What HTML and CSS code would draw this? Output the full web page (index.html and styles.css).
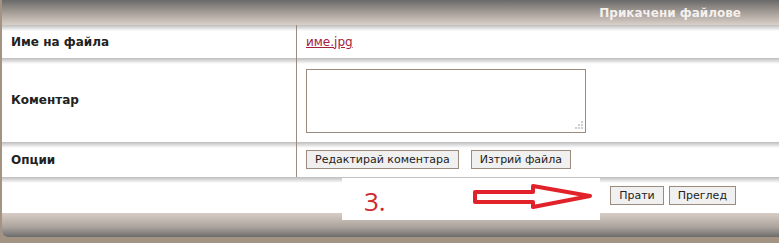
FILE: index.html
```html
<!DOCTYPE html>
<html lang="bg">
<head>
    <meta charset="UTF-8">
    <title>Прикачени файлове</title>
    <link rel="stylesheet" href="styles.css">
</head>
<body>
    <div class="panel">
        <div class="cap">Прикачени файлове</div>

        <table class="attach">
            <tr class="row-name">
                <td class="label">Име на файла</td>
                <td class="value"><a href="#">име.jpg</a></td>
            </tr>
            <tr class="row-comment">
                <td class="label">Коментар</td>
                <td class="value">
                    <span class="area-wrap">
                        <textarea class="comment"></textarea>
                        <span class="grip"></span>
                    </span>
                </td>
            </tr>
            <tr class="row-opts">
                <td class="label">Опции</td>
                <td class="value">
                    <button class="btn">Редактирай коментара</button>
                    <button class="btn btn-gap">Изтрий файла</button>
                </td>
            </tr>
        </table>

        <div class="foot">
            <div class="note">
                <span class="step">3.</span>
                <svg class="arrow" width="124" height="28" viewBox="0 0 124 28">
                    <polygon points="3,8 61,8 61,2 118,12 61,23 61,18 3,18" fill="#fff" stroke="#e2222a" stroke-width="4" stroke-linejoin="round"/>
                </svg>
            </div>
            <button class="btn">Прати</button>
            <button class="btn">Преглед</button>
        </div>

        <div class="bottom"></div>
    </div>
</body>
</html>
```

FILE: styles.css
```css
body {
    margin: 0;
    background: #a29382;
    font-family: "DejaVu Sans", Verdana, sans-serif;
    font-size: 12px;
    color: #222;
}
.panel {
    margin-left: 2px;
    background: #fff;
    height: 237px;
    border-bottom-left-radius: 5px;
    overflow: hidden;
    position: relative;
}
.cap {
    height: 25px;
    line-height: 26px;
    text-align: right;
    padding-right: 38px;
    font-weight: bold;
    color: #f4f0ee;
    background: linear-gradient(#6a6a6a, #a59d97 50%, #dad0ca);
}
.attach {
    width: 100%;
    border-collapse: collapse;
}
.attach td {
    padding: 0;
    background: linear-gradient(#bcbcbc, #fff 6px);
}
.label {
    width: 285px;
    padding-left: 9px !important;
    border-right: 1px solid #9c8b7d;
    font-weight: bold;
}
.value {
    padding-left: 9px !important;
}
.row-name td {
    height: 33px;
}
.row-comment td {
    height: 84px;
}
.row-opts td {
    height: 35px;
}
.value a {
    color: #a3203f;
}
.area-wrap {
    position: relative;
    display: inline-block;
    vertical-align: middle;
    margin-top: 2px;
}
.comment {
    display: block;
    box-sizing: border-box;
    width: 280px;
    height: 64px;
    margin: 0;
    padding: 2px;
    border: 1px solid #9c8b7d;
    resize: none;
    font-family: inherit;
}
.grip {
    position: absolute;
    right: 3px;
    bottom: 4px;
    width: 2px;
    height: 2px;
    background: #cfcfcf;
    box-shadow: -3px 0 #cfcfcf, -6px 0 #cfcfcf, 0 -3px #cfcfcf, -3px -3px #cfcfcf, 0 -6px #cfcfcf;
}
.btn {
    height: 19px;
    padding: 0 8px;
    border: 1px solid #9c8b7d;
    background: #f0f0f0;
    font-family: inherit;
    font-size: 11px;
    color: #222;
    vertical-align: middle;
}
.btn-gap {
    margin-left: 8px;
}
.foot {
    height: 36px;
    display: flex;
    align-items: center;
    justify-content: flex-end;
    gap: 5px;
    padding-right: 43px;
    background: linear-gradient(#bcbcbc, #fff 6px);
}
.note {
    position: absolute;
    left: 340px;
    top: 178px;
    width: 258px;
    height: 42px;
    background: #fff;
    z-index: 1;
}
.step {
    position: absolute;
    left: 22px;
    top: 8px;
    font-family: "Open Sans", "Liberation Sans", sans-serif;
    font-size: 26px;
    line-height: 30px;
    color: #cf2a2e;
}
.arrow {
    position: absolute;
    left: 130px;
    top: 6px;
}
.bottom {
    height: 24px;
    background: linear-gradient(#d8cdc6, #aaa29c 60%, #6c6c6c);
}
```
